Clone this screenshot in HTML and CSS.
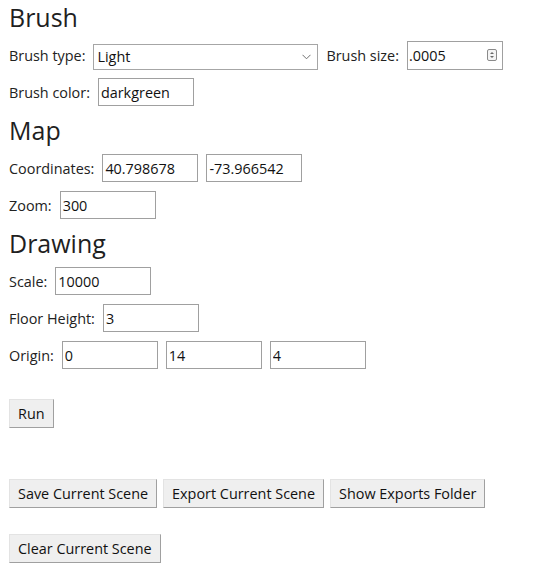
FILE: index.html
```html
<!DOCTYPE html>
<html>
<head>
<meta charset="utf-8">
<title>Scene Builder</title>
<link rel="stylesheet" href="styles.css">
</head>
<body>
<div class="form">
  <h2 class="section-title">Brush</h2>
  <div class="row">
    <label class="label">Brush type:</label>
    <div class="select-box">
      <select class="select"><option>Light</option></select>
      <svg class="chevron" width="9" height="6" viewBox="0 0 9 6"><path d="M0.5 0.8 L4.5 4.8 L8.5 0.8" fill="none" stroke="#707070" stroke-width="1"/></svg>
    </div>
    <label class="label">Brush size:</label>
    <div class="num-box">
      <input class="num-input" type="text" value=".0005">
      <svg class="spin" width="10" height="12" viewBox="0 0 10 12"><rect x="0.5" y="0.5" width="9" height="11" rx="1.5" fill="#f4f4f4" stroke="#8a8a8a"/><path d="M3 5 L5 3 L7 5 Z M3 7 L5 9 L7 7 Z" fill="#6a6a6a"/></svg>
    </div>
  </div>
  <div class="row">
    <label class="label">Brush color:</label>
    <input class="field" type="text" value="darkgreen">
  </div>

  <h2 class="section-title">Map</h2>
  <div class="row">
    <label class="label">Coordinates:</label>
    <input class="field" type="text" value="40.798678">
    <input class="field" type="text" value="-73.966542">
  </div>
  <div class="row">
    <label class="label">Zoom:</label>
    <input class="field" type="text" value="300">
  </div>

  <h2 class="section-title">Drawing</h2>
  <div class="row">
    <label class="label">Scale:</label>
    <input class="field" type="text" value="10000">
  </div>
  <div class="row">
    <label class="label">Floor Height:</label>
    <input class="field" type="text" value="3">
  </div>
  <div class="row">
    <label class="label">Origin:</label>
    <input class="field" type="text" value="0">
    <input class="field" type="text" value="14">
    <input class="field" type="text" value="4">
  </div>
</div>

<div class="actions run-actions">
  <button class="btn">Run</button>
</div>
<div class="actions scene-actions">
  <button class="btn">Save Current Scene</button>
  <button class="btn">Export Current Scene</button>
  <button class="btn">Show Exports Folder</button>
</div>
<div class="actions clear-actions">
  <button class="btn">Clear Current Scene</button>
</div>
</body>
</html>
```

FILE: styles.css
```css
html, body {
  margin: 0;
  background: #ffffff;
}
body {
  padding: 2px 8px 0 9px;
  font-family: "Open Sans", "Noto Sans", sans-serif;
  font-size: 14.4px;
  color: #222222;
}
.form {
  display: flex;
  flex-direction: column;
  gap: 9px;
}
.section-title {
  margin: 0;
  font-size: 25px;
  font-weight: normal;
  line-height: 30px;
  color: #1f1f1f;
}
.row {
  display: flex;
  align-items: center;
  gap: 8px;
  height: 28px;
}
.label {
  white-space: nowrap;
}
.field {
  box-sizing: border-box;
  width: 96px;
  height: 28px;
  border: 1px solid #a0a0a0;
  padding: 0 2px;
  font: inherit;
  color: #111;
  background: #fff;
  outline: none;
}
.select-box {
  box-sizing: border-box;
  width: 225px;
  height: 26px;
  border: 1px solid #a6a6a6;
  display: flex;
  align-items: center;
  margin-top: 3px;
  background: #fff;
}
.select {
  appearance: none;
  -webkit-appearance: none;
  border: none;
  background: transparent;
  font: inherit;
  color: #111;
  flex: 1;
  padding: 0 3px;
  height: 24px;
  outline: none;
}
.chevron {
  margin-right: 6px;
}
.num-box {
  box-sizing: border-box;
  width: 96px;
  height: 29px;
  border: 1px solid #a0a0a0;
  display: flex;
  align-items: center;
  background: #fff;
}
.num-input {
  border: none;
  outline: none;
  font: inherit;
  color: #111;
  width: 70px;
  padding: 0 1px;
  flex: 1;
  min-width: 0;
}
.spin {
  margin-right: 5px;
}
.actions {
  display: flex;
  gap: 6px;
}
.run-actions {
  margin-top: 30px;
}
.scene-actions {
  margin-top: 51px;
}
.clear-actions {
  margin-top: 26px;
}
.btn {
  box-sizing: border-box;
  height: 29px;
  padding: 0 8px;
  font: inherit;
  color: #111;
  background: #efefef;
  border: 1px solid;
  border-color: #e3e3e3 #a0a0a0 #a0a0a0 #e3e3e3;
  border-radius: 0;
}
```
